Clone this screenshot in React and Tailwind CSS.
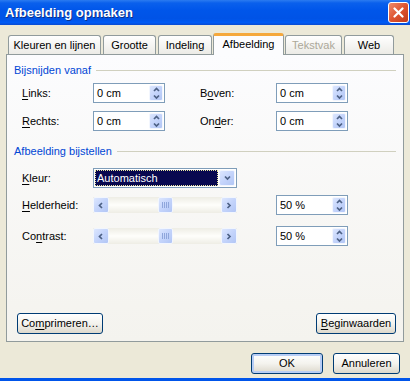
import React from "react";

const Chevron = ({ dir = "down", className = "" }) => {
  const paths = {
    up: "M1 4 L3.5 1.5 L6 4",
    down: "M1 1.5 L3.5 4 L6 1.5",
    left: "M4 1 L1.5 3.5 L4 6",
    right: "M1.5 1 L4 3.5 L1.5 6",
  };
  const vertical = dir === "up" || dir === "down";
  return (
    <svg width={vertical ? 7 : 6} height={vertical ? 6 : 7} viewBox={vertical ? "0 0 7 6" : "0 0 6 7"} className={className}>
      <path d={paths[dir]} fill="none" stroke="#4D6185" strokeWidth="1.7" />
    </svg>
  );
};

const blueBtn =
  "flex items-center justify-center rounded-[2px] border border-[#F2F6FE] bg-gradient-to-br from-[#DCE6FE] via-[#C4D4FB] to-[#B2C6F5]";

const Spin = () => (
  <div className={`${blueBtn} ml-auto h-[16px] w-[14px] flex-col gap-[1px]`}>
    <Chevron dir="up" />
    <Chevron dir="down" />
  </div>
);

const NumBox = ({ value }) => (
  <div className="flex h-[20px] w-[72px] items-center border border-[#7F9DB9] bg-white pl-[3px] pr-[1px]">
    <span>{value}</span>
    <Spin />
  </div>
);

const U = ({ children }) => <span className="underline underline-offset-2">{children}</span>;

const Section = ({ title }) => (
  <div className="flex h-[14px] items-center pl-[7px] pr-[7px]">
    <span className="text-[#0046D5]">{title}</span>
    <div className="ml-[5px] h-px flex-1 bg-[#D0D0BF]" />
  </div>
);

const Scroll = () => (
  <div className="flex h-[16px] w-[144px] items-center bg-gradient-to-b from-[#EEEDE5] via-[#FEFEFB] to-[#EEEDE5]">
    <div className={`${blueBtn} h-[16px] w-[16px]`}>
      <Chevron dir="left" />
    </div>
    <div className="flex-1" />
    <div className={`${blueBtn} h-[16px] w-[15px] gap-[1px]`}>
      <span className="h-[6px] w-px bg-[#8FA6DB]" />
      <span className="h-[6px] w-px bg-[#8FA6DB]" />
      <span className="h-[6px] w-px bg-[#8FA6DB]" />
      <span className="h-[6px] w-px bg-[#8FA6DB]" />
    </div>
    <div className="flex-1" />
    <div className={`${blueBtn} h-[16px] w-[16px]`}>
      <Chevron dir="right" />
    </div>
  </div>
);

const Button = ({ children, className = "" }) => (
  <button
    type="button"
    className={`flex h-[21px] items-center justify-center rounded-[3px] border border-[#003C74] bg-gradient-to-b from-[#FFFFFF] via-[#F4F3EE] to-[#DCD8CC] ${className}`}
  >
    {children}
  </button>
);

const tabs = [
  { label: "Kleuren en lijnen", w: "w-[93px]", ml: "ml-[2px]" },
  { label: "Grootte", w: "w-[53px]", ml: "ml-[2px]" },
  { label: "Indeling", w: "w-[54px]", ml: "ml-[2px]" },
  { label: "Afbeelding", w: "w-[71px]", ml: "ml-[1px]", active: true },
  { label: "Tekstvak", w: "w-[57px]", ml: "ml-[1px]", disabled: true },
  { label: "Web", w: "w-[50px]", ml: "ml-[2px]" },
];

export default function App() {
  return (
    <div
      className="flex h-[381px] w-[410px] flex-col overflow-hidden bg-[#ECE9D8] text-[11px] leading-none text-black"
      style={{ fontFamily: '"Liberation Sans", Arial, sans-serif' }}
    >
      {/* title bar */}
      <div className="flex h-[25px] shrink-0 items-center justify-between bg-[linear-gradient(to_bottom,#2B7BF0_0%,#0A60EC_12%,#0056EA_40%,#0053E6_75%,#005BF5_90%,#0A4BD0_100%)] pl-[5px] pr-[1px]">
        <span className="text-[13px] font-bold text-white [text-shadow:1px_1px_0_#0B2F87]">Afbeelding opmaken</span>
        <div className="flex h-[21px] w-[21px] items-center justify-center rounded-[3px] border border-white bg-gradient-to-br from-[#ED8A6A] via-[#DE5430] to-[#C13A1A]">
          <svg width="11" height="11" viewBox="0 0 11 11">
            <path d="M1.5 1.5 L9.5 9.5 M9.5 1.5 L1.5 9.5" stroke="white" strokeWidth="2.2" strokeLinecap="round" />
          </svg>
        </div>
      </div>

      {/* tabs */}
      <div className="mt-[9px] flex h-[20px] items-end px-[6px]">
        {tabs.map((t) => (
          <div
            key={t.label}
            className={`${t.w} ${t.ml} flex items-center justify-center rounded-t-[3px] ${
              t.active
                ? "relative z-10 -mb-px h-[22px] border-x border-t-[3px] border-x-[#919B9C] border-t-[#F5A83C] bg-[#FCFCFE] pb-[2px]"
                : "h-[19px] border-x border-t border-[#919B9C] bg-gradient-to-b from-[#FFFFFF] to-[#ECEBE6]"
            } ${t.disabled ? "text-[#ACA899]" : ""}`}
          >
            {t.label}
          </div>
        ))}
      </div>

      {/* panel */}
      <div className="mx-[6px] flex h-[288px] flex-col border border-[#919B9C] bg-gradient-to-b from-[#FCFCFE] to-[#F4F3EE]">
        <div className="mt-[8px]">
          <Section title="Bijsnijden vanaf" />
        </div>

        <div className="mt-[6px] flex items-center pl-[15px]">
          <span className="w-[71px]"><U>L</U>inks:</span>
          <NumBox value="0 cm" />
          <span className="ml-[35px] w-[76px]">B<U>o</U>ven:</span>
          <NumBox value="0 cm" />
        </div>
        <div className="mt-[8px] flex items-center pl-[15px]">
          <span className="w-[71px]"><U>R</U>echts:</span>
          <NumBox value="0 cm" />
          <span className="ml-[35px] w-[76px]">On<U>d</U>er:</span>
          <NumBox value="0 cm" />
        </div>

        <div className="mt-[13px]">
          <Section title="Afbeelding bijstellen" />
        </div>

        <div className="mt-[10px] flex items-center pl-[15px]">
          <span className="w-[71px]"><U>K</U>leur:</span>
          <div className="flex h-[20px] w-[144px] items-center border border-[#7F9DB9] bg-white p-[1px]">
            <div className="flex h-full flex-1 items-center border border-dotted border-[#E8E8A0] bg-[#08084F] pl-[1px] text-white">
              Automatisch
            </div>
            <div className={`${blueBtn} ml-[1px] h-full w-[16px]`}>
              <Chevron dir="down" />
            </div>
          </div>
        </div>

        <div className="mt-[7px] flex items-center pl-[15px]">
          <span className="w-[71px]"><U>H</U>elderheid:</span>
          <Scroll />
          <div className="ml-[39px]">
            <NumBox value="50 %" />
          </div>
        </div>

        <div className="mt-[11px] flex items-center pl-[15px]">
          <span className="w-[71px]">Co<U>n</U>trast:</span>
          <Scroll />
          <div className="ml-[39px]">
            <NumBox value="50 %" />
          </div>
        </div>

        <div className="mb-[7px] mt-auto flex items-center justify-between pl-[10px] pr-[7px]">
          <Button className="w-[86px]">Co<U>m</U>primeren…</Button>
          <Button className="w-[80px]"><U>B</U>eginwaarden</Button>
        </div>
      </div>

      {/* footer */}
      <div className="mt-[11px] flex justify-end gap-[10px] pr-[10px]">
        <Button className="w-[72px] shadow-[inset_0_0_0_2px_#B7CDF5]">OK</Button>
        <Button className="w-[67px]">Annuleren</Button>
      </div>

      <div className="mt-auto h-[3px] bg-[#0055EA]" />
    </div>
  );
}
